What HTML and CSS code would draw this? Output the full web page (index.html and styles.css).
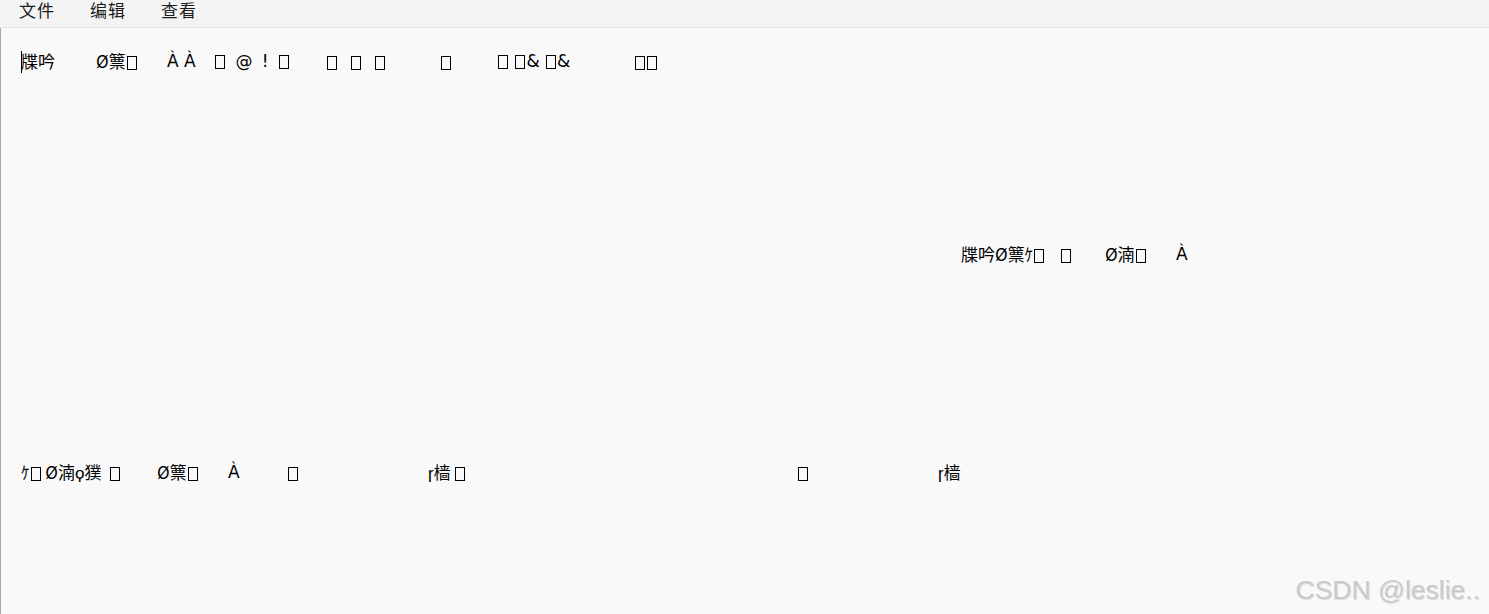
FILE: index.html
```html
<!DOCTYPE html>
<html>
  <head>
    <title>记事本</title>
    <link rel="stylesheet" href="styles.css">
  </head>
  <body>
    <div class="window">
      <div class="menubar">
        <span class="menu-item">文件</span>
        <span class="menu-item">编辑</span>
        <span class="menu-item">查看</span>
      </div>

      <div class="editor">
        <div class="line line-1">
          <span class="seg"><span class="caret"></span>牒吟</span>
          <span class="seg">Ø篻<span class="box"></span></span>
          <span class="seg lat">À À</span>
          <span class="seg lat spaced"><span class="box"></span> @ ! <span class="box"></span></span>
          <span class="seg wide"><span class="box"></span> <span class="box"></span> <span class="box"></span></span>
          <span class="seg"><span class="box"></span></span>
          <span class="seg lat"><span class="box"></span> <span class="box"></span>&amp; <span class="box"></span>&amp;</span>
          <span class="seg"><span class="box"></span><span class="box"></span></span>
        </div>

        <div class="line line-2">
          <span class="seg">牒吟Ø篻ｹ<span class="box"></span>    <span class="box"></span></span>
          <span class="seg">Ø湳<span class="box"></span></span>
          <span class="seg lat">À</span>
        </div>

        <div class="line line-3">
          <span class="seg">ｹ<span class="box"></span> Ø湳ϙ獛  <span class="box"></span></span>
          <span class="seg">Ø篻<span class="box"></span></span>
          <span class="seg lat">À</span>
          <span class="seg"><span class="box"></span></span>
          <span class="seg">ɼ樯 <span class="box"></span></span>
          <span class="seg"><span class="box"></span></span>
          <span class="seg">ɼ樯</span>
        </div>
      </div>

      <div class="watermark">CSDN @leslie..</div>
    </div>
  </body>
</html>
```

FILE: styles.css
```css
* {
  box-sizing: border-box;
  margin: 0;
  padding: 0;
}

body {
  width: 1489px;
  height: 614px;
  overflow: hidden;
  background: #f9f9f9;
  font-family: 'Noto Sans CJK JP', 'Noto Sans CJK SC', sans-serif;
  color: #000;
}

.window {
  position: relative;
  display: flex;
  flex-direction: column;
  height: 100%;
}

/* barre de menu */
.menubar {
  display: flex;
  gap: 35px;
  height: 28px;
  padding-left: 19px;
  background: #f3f3f3;
  border-bottom: 1px solid #e3e3e3;
}

.menu-item {
  font-family: 'Noto Sans CJK SC', sans-serif;
  font-size: 17px;
  line-height: 17px;
  margin-top: 1px;
  color: #1b1b1b;
  letter-spacing: 1px;
}

/* zone de texte */
.editor {
  flex: 1;
  border-left: 1px solid #a8a8a8;
  padding-top: 21px;
  font-size: 17px;
}

.line {
  display: grid;
  align-items: center;
  height: 24px;
  line-height: 24px;
  white-space: pre;
}

.line-1 {
  padding-left: 20px;
  grid-template-columns: 75px 71px 47px 112px 114px 57px 137px auto;
}

.line-2 {
  margin-top: 169px;
  padding-left: 960px;
  grid-template-columns: 144px 71px auto;
}

.line-3 {
  margin-top: 194px;
  padding-left: 20px;
  grid-template-columns: 136px 71px 59px 141px 369px 141px auto;
}

.seg {
  display: block;
  white-space: pre;
}

.lat {
  font-family: 'DejaVu Sans', sans-serif;
  font-size: 17px;
}

.spaced {
  word-spacing: 4px;
}

.wide {
  word-spacing: 8px;
}

.box {
  display: inline-block;
  width: 10px;
  height: 14px;
  border: 1px solid #000;
  margin: 0 1px;
  vertical-align: -2px;
}

.caret {
  display: inline-block;
  width: 1px;
  height: 22px;
  margin-right: -1px;
  vertical-align: -5px;
  background: #000;
}

/* filigrane */
.watermark {
  position: absolute;
  right: 9px;
  bottom: 8px;
  font-family: 'Liberation Sans', Arial, sans-serif;
  font-size: 26.5px;
  color: #cacaca;
  text-shadow: 1px 1px 1px rgba(0, 0, 0, 0.12);
}
```
